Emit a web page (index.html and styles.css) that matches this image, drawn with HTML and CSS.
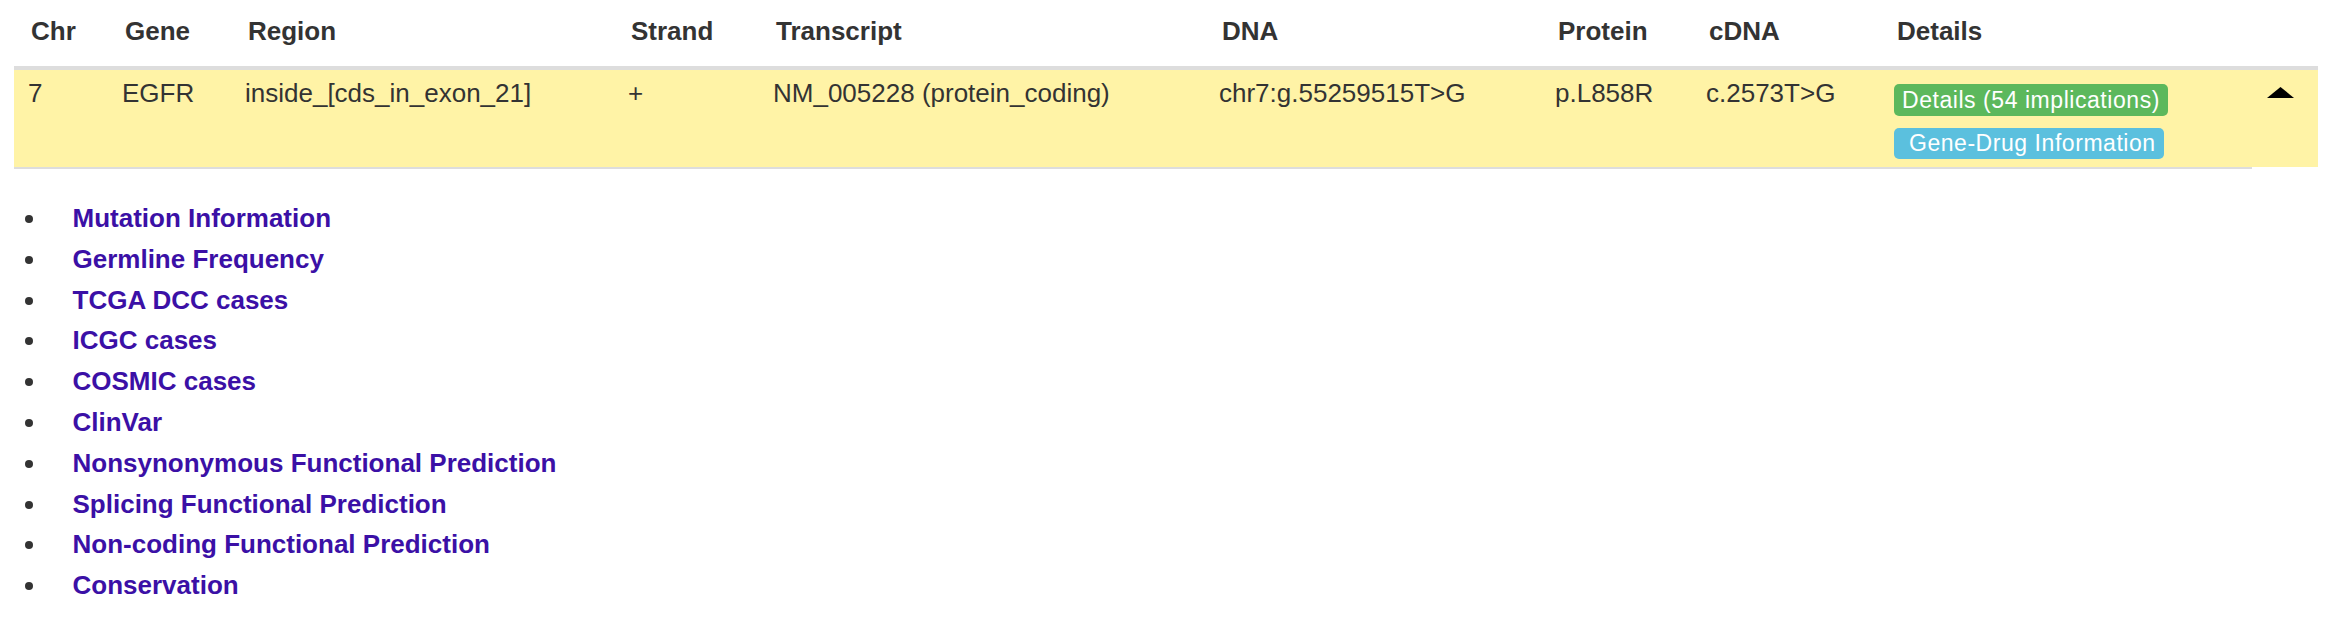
FILE: index.html
```html
<!DOCTYPE html>
<html>
<head>
<meta charset="utf-8">
<link rel="stylesheet" href="styles.css">
</head>
<body>
<table class="variants">
  <colgroup>
    <col class="c-chr"><col class="c-gene"><col class="c-region"><col class="c-strand"><col class="c-transcript"><col class="c-dna"><col class="c-protein"><col class="c-cdna"><col class="c-details"><col class="c-toggle">
  </colgroup>
  <thead>
    <tr>
      <th>Chr</th><th>Gene</th><th>Region</th><th>Strand</th><th>Transcript</th><th>DNA</th><th>Protein</th><th>cDNA</th><th>Details</th><th></th>
    </tr>
  </thead>
  <tbody>
    <tr class="hl">
      <td>7</td>
      <td>EGFR</td>
      <td>inside_[cds_in_exon_21]</td>
      <td>+</td>
      <td>NM_005228 (protein_coding)</td>
      <td>chr7:g.55259515T&gt;G</td>
      <td>p.L858R</td>
      <td>c.2573T&gt;G</td>
      <td class="details">
        <div class="labels">
          <span class="label label-green">Details (54 implications)</span>
          <span class="label label-blue label-2">&nbsp;Gene-Drug Information</span>
        </div>
      </td>
      <td class="toggle">
        <svg class="tri" width="27" height="11" viewBox="0 0 27 11"><polygon points="13.5,0 27,11 0,11" fill="#000"/></svg>
      </td>
    </tr>
  </tbody>
</table>
<ul class="sections">
  <li><a href="#">Mutation Information</a></li>
  <li><a href="#">Germline Frequency</a></li>
  <li><a href="#">TCGA DCC cases</a></li>
  <li><a href="#">ICGC cases</a></li>
  <li><a href="#">COSMIC cases</a></li>
  <li><a href="#">ClinVar</a></li>
  <li><a href="#">Nonsynonymous Functional Prediction</a></li>
  <li><a href="#">Splicing Functional Prediction</a></li>
  <li><a href="#">Non-coding Functional Prediction</a></li>
  <li><a href="#">Conservation</a></li>
</ul>
</body>
</html>
```

FILE: styles.css
```css
body {
  margin: 0;
  background: #fff;
  color: #333;
  font-family: "Liberation Sans", Arial, Helvetica, sans-serif;
}

.variants {
  margin-left: 14px;
  width: 2304px;
  table-layout: fixed;
  border-collapse: separate;
  border-spacing: 0;
  font-size: 26px;
}

.c-chr { width: 94px; }
.c-gene { width: 123px; }
.c-region { width: 383px; }
.c-strand { width: 145px; }
.c-transcript { width: 446px; }
.c-dna { width: 336px; }
.c-protein { width: 151px; }
.c-cdna { width: 188px; }
.c-details { width: 372px; }
.c-toggle { width: 66px; }

.variants th {
  text-align: left;
  font-weight: bold;
  line-height: 30px;
  padding: 16px 10px 20px 17px;
  border-bottom: 4px solid #ddd;
  vertical-align: bottom;
  white-space: nowrap;
}

.variants td {
  line-height: 30px;
  padding: 8px 10px 8px 14px;
  vertical-align: top;
  background: #fff3a6;
  border-bottom: 2px solid #ddd;
  white-space: nowrap;
}

.variants td.details {
  padding-top: 14px;
}

.variants td.toggle {
  padding: 17px 0 0 15px;
  border-bottom-color: #fff;
}

.tri {
  display: block;
}

.labels {
  display: flex;
  flex-direction: column;
  align-items: flex-start;
  gap: 12px;
}

.label {
  display: block;
  color: #fff;
  font-size: 23px;
  letter-spacing: 0.55px;
  line-height: 32px;
  padding: 0 8px;
  border-radius: 5px;
}

.label-2 {
  line-height: 31px;
}

.label-green {
  background: #5cb85c;
}

.label-blue {
  background: #5bc0de;
}

.sections {
  list-style: none;
  margin: 29px 0 0;
  padding: 0;
  font-size: 26px;
  font-weight: bold;
  line-height: 40.8px;
}

.sections li::before {
  content: "";
  display: inline-block;
  width: 8px;
  height: 8px;
  border-radius: 50%;
  background: #333;
  margin: 0 39.5px 0 25px;
  vertical-align: 4px;
}

.sections a {
  color: #3b10a6;
  text-decoration: none;
}
```
